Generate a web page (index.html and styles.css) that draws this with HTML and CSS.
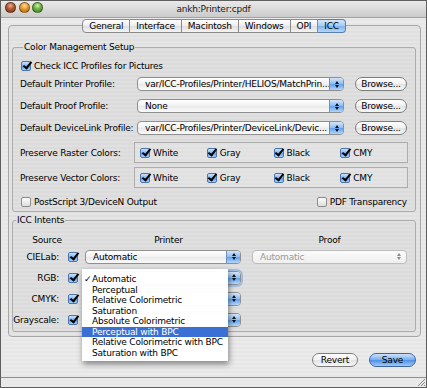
FILE: index.html
```html
<!DOCTYPE html>
<html lang="en">
<head>
    <meta charset="UTF-8">
    <title>ankh:Printer:cpdf</title>
    <link rel="stylesheet" href="styles.css">
</head>
<body>
    <div class="window">
        <div class="titlebar">
            <div class="lights">
                <span class="light close"></span>
                <span class="light mini"></span>
                <span class="light zoom"></span>
            </div>
            <span class="title">ankh:Printer:cpdf</span>
        </div>

        <div class="content">
            <div class="tabpanel">
                <div class="tabs">
                    <span class="tab">General</span>
                    <span class="tab">Interface</span>
                    <span class="tab">Macintosh</span>
                    <span class="tab">Windows</span>
                    <span class="tab">OPI</span>
                    <span class="tab active">ICC</span>
                </div>

                <fieldset class="group setup">
                    <legend>Color Management Setup</legend>
                    <div class="check-row">
                        <span class="opt"><span class="cb on"></span>Check ICC Profiles for Pictures</span>
                    </div>
                    <div class="form-row">
                        <span class="label">Default Printer Profile:</span>
                        <div class="popup profile"><span class="value">var/ICC-Profiles/Printer/HELIOS/MatchPrin...</span><span class="arrows"></span></div>
                        <span class="btn browse">Browse...</span>
                    </div>
                    <div class="form-row">
                        <span class="label">Default Proof Profile:</span>
                        <div class="popup profile"><span class="value">None</span><span class="arrows"></span></div>
                        <span class="btn browse">Browse...</span>
                    </div>
                    <div class="form-row">
                        <span class="label">Default DeviceLink Profile:</span>
                        <div class="popup profile"><span class="value">var/ICC-Profiles/Printer/DeviceLink/Devic...</span><span class="arrows"></span></div>
                        <span class="btn browse">Browse...</span>
                    </div>
                    <div class="preserve-row">
                        <span class="label short">Preserve Raster Colors:</span>
                        <div class="colorbox">
                            <span class="opt color"><span class="cb on"></span>White</span>
                            <span class="opt color"><span class="cb on"></span>Gray</span>
                            <span class="opt color"><span class="cb on"></span>Black</span>
                            <span class="opt color"><span class="cb on"></span>CMY</span>
                        </div>
                    </div>
                    <div class="preserve-row">
                        <span class="label short">Preserve Vector Colors:</span>
                        <div class="colorbox">
                            <span class="opt color"><span class="cb on"></span>White</span>
                            <span class="opt color"><span class="cb on"></span>Gray</span>
                            <span class="opt color"><span class="cb on"></span>Black</span>
                            <span class="opt color"><span class="cb on"></span>CMY</span>
                        </div>
                    </div>
                    <div class="options-row">
                        <span class="opt"><span class="cb"></span>PostScript 3/DeviceN Output</span>
                        <span class="opt"><span class="cb"></span>PDF Transparency</span>
                    </div>
                </fieldset>

                <fieldset class="group intents">
                    <legend>ICC Intents</legend>
                    <div class="intent-grid">
                        <span class="head source">Source</span>
                        <span class="head">Printer</span>
                        <span class="head">Proof</span>

                        <span class="src">CIELab:</span>
                        <span class="cb on"></span>
                        <div class="popup intent"><span class="value">Automatic</span><span class="arrows"></span></div>
                        <div class="popup intent disabled"><span class="value">Automatic</span><span class="arrows"></span></div>

                        <span class="src">RGB:</span>
                        <span class="cb on"></span>
                        <div class="popup intent focus"><span class="value"></span><span class="arrows"></span></div>
                        <span></span>

                        <span class="src">CMYK:</span>
                        <span class="cb on"></span>
                        <div class="popup intent"><span class="value"></span><span class="arrows"></span></div>
                        <span></span>

                        <span class="src">Grayscale:</span>
                        <span class="cb on"></span>
                        <div class="popup intent"><span class="value"></span><span class="arrows"></span></div>
                        <span></span>
                    </div>
                </fieldset>
            </div>

            <div class="actions">
                <span class="btn revert">Revert</span>
                <span class="btn save">Save</span>
            </div>
        </div>

        <div class="statusbar">
            <svg class="grip" width="10" height="10" viewBox="0 0 10 10">
                <path d="M9 2 L2 9 M9 5 L5 9 M9 8 L8 9" stroke="#8a8a8a" stroke-width="1"/>
            </svg>
        </div>

        <!-- open popup menu of the RGB printer intent -->
        <div class="menu">
            <div class="menu-item checked">Automatic</div>
            <div class="menu-item">Perceptual</div>
            <div class="menu-item">Relative Colorimetric</div>
            <div class="menu-item">Saturation</div>
            <div class="menu-item">Absolute Colorimetric</div>
            <div class="menu-item hi">Perceptual with BPC</div>
            <div class="menu-item">Relative Colorimetric with BPC</div>
            <div class="menu-item">Saturation with BPC</div>
        </div>
    </div>
</body>
</html>
```

FILE: styles.css
```css
* {
    box-sizing: border-box;
}
body {
    margin: 0;
    font-family: "DejaVu Sans", sans-serif;
    font-size: 9px;
    letter-spacing: -0.2px;
    color: #000;
}
.window {
    position: relative;
    width: 427px;
    height: 388px;
    border: 1px solid #5e5e5e;
    display: flex;
    flex-direction: column;
    overflow: hidden;
    background: repeating-linear-gradient(#ebebeb 0 2px, #e6e6e6 2px 4px);
}

/* title bar */
.titlebar {
    position: relative;
    flex: none;
    height: 17px;
    display: flex;
    align-items: center;
    justify-content: center;
    background: linear-gradient(#e9e9e9, #cbcbcb);
    border-bottom: 1px solid #a2a2a2;
}
.title {
    color: #1a1a1a;
}
.lights {
    position: absolute;
    left: 4px;
    top: 1px;
    display: flex;
    gap: 2.5px;
}
.light {
    width: 11px;
    height: 11px;
    border-radius: 50%;
    border: 1px solid rgba(0, 0, 0, 0.35);
}
.light.close {
    background: radial-gradient(circle at 50% 30%, #e7b08f 0, #b15a33 45%, #7c3316 100%);
}
.light.mini {
    background: radial-gradient(circle at 50% 30%, #fbe0a6 0, #e99a2c 45%, #ad6207 100%);
}
.light.zoom {
    background: radial-gradient(circle at 50% 30%, #d4f0b2 0, #69b23f 45%, #3b7d18 100%);
}

/* body */
.content {
    flex: 1;
    padding: 7px 5px 0 7px;
}
.tabpanel {
    height: 312px;
    border: 1px solid #a6a6a6;
    border-radius: 4px;
    background: rgba(0, 0, 0, 0.025);
    padding: 0 4px 0 3px;
}
.tabs {
    display: flex;
    justify-content: center;
    margin-top: -7px;
}
.tab {
    height: 14px;
    line-height: 12px;
    padding: 0 6px;
    border: 1px solid #8a8a8a;
    border-left: none;
    background: linear-gradient(#ffffff, #ececec 50%, #dedede 51%, #f4f4f4);
}
.tab:first-child {
    border-left: 1px solid #8a8a8a;
    border-radius: 4px 0 0 4px;
}
.tab:last-child {
    border-radius: 0 4px 4px 0;
}
.tab.active {
    border-color: #5a7fb3;
    background: linear-gradient(#d6e8fb, #a4c9f2 50%, #7eb1ec 51%, #b6d7f8);
}

.group {
    margin: 0;
    min-width: 0;
    border: 1px solid #acacac;
    border-radius: 3px;
    background: rgba(0, 0, 0, 0.02);
}
.group legend {
    padding: 0 1px;
    margin-left: 3px;
    line-height: 11px;
}
.setup {
    margin-top: 9px;
    padding: 5px 6px 2px 7px;
}
.intents {
    margin-top: 3px;
    padding: 7px 0 1px 0;
}

.check-row {
    height: 15px;
    display: flex;
    align-items: center;
    padding-left: 1px;
}
.form-row {
    height: 22px;
    display: flex;
    align-items: center;
}
.label {
    width: 117px;
    flex: none;
}
.label.short {
    width: 114px;
}
.preserve-row {
    margin-top: 3px;
    display: flex;
    align-items: center;
}
.preserve-row + .preserve-row {
    margin-top: 4px;
}
.colorbox {
    width: 274px;
    height: 21px;
    border: 1px solid #acacac;
    display: flex;
    align-items: center;
    padding-left: 5px;
    background: rgba(255, 255, 255, 0.15);
}
.options-row {
    margin-top: 7px;
    height: 14px;
    display: flex;
    align-items: center;
    justify-content: space-between;
    padding: 0 2px 0 1px;
}
.opt {
    display: flex;
    align-items: center;
    gap: 3px;
}
.opt.color {
    width: 67px;
}

/* aqua checkbox */
.cb {
    position: relative;
    width: 10px;
    height: 10px;
    flex: none;
    border: 1px solid #8c8c8c;
    border-radius: 2px;
    background: linear-gradient(#fdfdfd, #dedede);
}
.cb.on {
    border-color: #4a73ad;
    background: linear-gradient(#cfe5fb, #79b1ee 50%, #5c9ae4 51%, #a7d0f8);
}
.cb.on::after {
    content: "";
    position: absolute;
    left: 2.5px;
    top: -2px;
    width: 3px;
    height: 7px;
    border-right: 2px solid #000;
    border-bottom: 2px solid #000;
    transform: rotate(38deg);
}

/* popup buttons */
.popup {
    height: 14px;
    display: flex;
    align-items: center;
    border: 1px solid #8f8f8f;
    border-radius: 4px;
    background: linear-gradient(#ffffff, #f1f1f1 50%, #e9e9e9 51%, #fafafa);
    overflow: hidden;
}
.popup .value {
    flex: 1;
    padding-left: 7px;
    white-space: nowrap;
    overflow: hidden;
}
.popup .arrows {
    width: 14px;
    height: 100%;
    flex: none;
    display: flex;
    flex-direction: column;
    align-items: center;
    justify-content: center;
    gap: 1px;
    border-left: 1px solid #6f8fbd;
    background: linear-gradient(#d3e6fb, #8bbcf0 50%, #5f9fec 51%, #b3d6f9);
}
.popup .arrows::before {
    content: "";
    border-left: 2px solid transparent;
    border-right: 2px solid transparent;
    border-bottom: 3px solid #111;
}
.popup .arrows::after {
    content: "";
    border-left: 2px solid transparent;
    border-right: 2px solid transparent;
    border-top: 3px solid #111;
}
.popup.profile {
    width: 207px;
}
.popup.intent {
    width: 156px;
}
.popup.focus {
    box-shadow: 0 0 0 2px rgba(110, 160, 230, 0.55);
}
.popup.disabled {
    width: 155px;
    border-color: #bdbdbd;
    color: #9a9a9a;
    background: linear-gradient(#fbfbfb, #efefef);
}
.popup.disabled .arrows {
    border-left: none;
    background: none;
}
.popup.disabled .arrows::before {
    border-bottom-color: #8a8a8a;
}
.popup.disabled .arrows::after {
    border-top-color: #8a8a8a;
}

/* push buttons */
.btn {
    height: 14px;
    line-height: 12px;
    border: 1px solid #7d7d7d;
    border-radius: 7px;
    text-align: center;
    background: linear-gradient(#ffffff, #f0f0f0 50%, #e2e2e2 51%, #f7f7f7);
}
.btn.browse {
    width: 52px;
    margin-left: 11px;
}
.btn.revert {
    width: 46px;
}
.btn.save {
    width: 47px;
    border-color: #3e64a3;
    background: linear-gradient(#cfe3fa, #74abee 50%, #4a8fe6 51%, #9fcaf8);
}
.actions {
    display: flex;
    justify-content: flex-end;
    gap: 11px;
    padding: 16px 5px 0 0;
}

/* ICC intents table */
.intent-grid {
    display: grid;
    grid-template-columns: 49px 23px 167px 155px;
    grid-template-rows: 13px repeat(4, 21px);
    align-items: center;
}
.head {
    text-align: center;
}
.head.source {
    grid-column: 1 / span 2;
    padding-right: 4px;
}
.src {
    text-align: right;
    padding-right: 3px;
}
.intent-grid .cb {
    margin-left: 6px;
}

.statusbar {
    position: relative;
    flex: none;
    height: 10px;
    border-top: 1px solid #8e8e8e;
    background: #e9e9e9;
}
.grip {
    position: absolute;
    right: 0;
    bottom: 0;
}

/* popup menu */
.menu {
    position: absolute;
    left: 81px;
    top: 268px;
    width: 146px;
    padding: 5px 0 3px;
    background: rgba(255, 255, 255, 0.97);
    box-shadow: 1px 3px 6px rgba(0, 0, 0, 0.45);
}
.menu-item {
    position: relative;
    height: 10.5px;
    line-height: 10.5px;
    padding-left: 10px;
    white-space: nowrap;
}
.menu-item.checked::before {
    content: "\2713";
    position: absolute;
    left: 2px;
}
.menu-item.hi {
    background: #3a6fd4;
    color: #fff;
}
```
